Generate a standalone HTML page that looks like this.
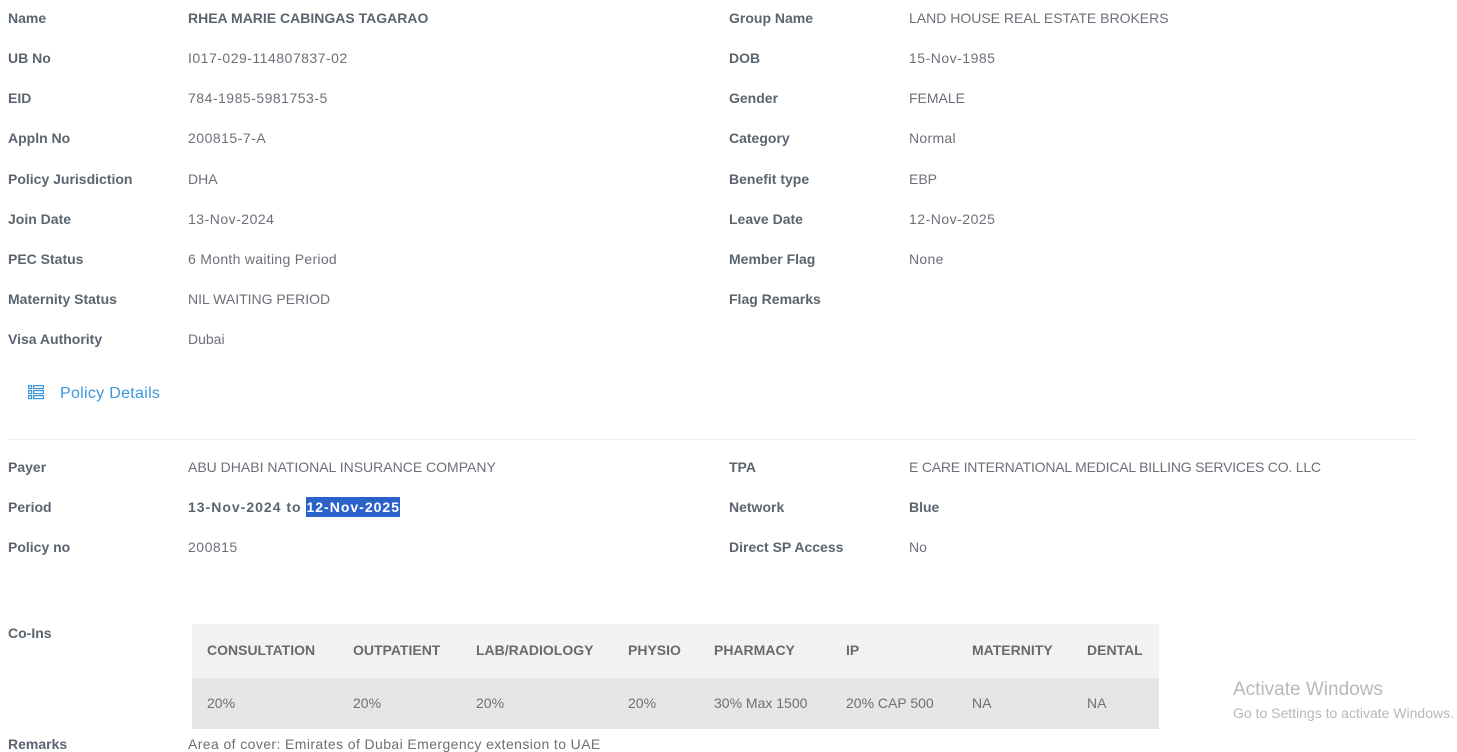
<!DOCTYPE html>
<html><head><meta charset="utf-8"><style>
body{margin:0;background:#fff;width:1457px;height:751px;overflow:hidden;position:relative;font-family:"Liberation Sans",sans-serif;font-size:14px;}
.t{position:absolute;line-height:16px;white-space:nowrap;}
.l{font-weight:bold;color:#5b6570;}
.v{color:#6b7078;}
.b{font-weight:bold;color:#5b6570;}
.h{font-weight:bold;color:#6a6a6a;}
</style></head><body>
<div class="t l" style="left:8px;top:10px">Name</div><div class="t b" style="left:188px;top:10px">RHEA MARIE CABINGAS TAGARAO</div>
<div class="t l" style="left:8px;top:50px">UB No</div><div class="t v" style="left:188px;top:50px;letter-spacing:0.5px">I017-029-114807837-02</div>
<div class="t l" style="left:8px;top:90px">EID</div><div class="t v" style="left:188px;top:90px;letter-spacing:0.5px">784-1985-5981753-5</div>
<div class="t l" style="left:8px;top:130px">Appln No</div><div class="t v" style="left:188px;top:130px;letter-spacing:0.5px">200815-7-A</div>
<div class="t l" style="left:8px;top:171px">Policy Jurisdiction</div><div class="t v" style="left:188px;top:171px">DHA</div>
<div class="t l" style="left:8px;top:211px">Join Date</div><div class="t v" style="left:188px;top:211px;letter-spacing:0.5px">13-Nov-2024</div>
<div class="t l" style="left:8px;top:251px">PEC Status</div><div class="t v" style="left:188px;top:251px;letter-spacing:0.3px">6 Month waiting Period</div>
<div class="t l" style="left:8px;top:291px">Maternity Status</div><div class="t v" style="left:188px;top:291px">NIL WAITING PERIOD</div>
<div class="t l" style="left:8px;top:331px">Visa Authority</div><div class="t v" style="left:188px;top:331px">Dubai</div>

<div class="t l" style="left:729px;top:10px">Group Name</div><div class="t v" style="left:909px;top:10px">LAND HOUSE REAL ESTATE BROKERS</div>
<div class="t l" style="left:729px;top:50px">DOB</div><div class="t v" style="left:909px;top:50px;letter-spacing:0.5px">15-Nov-1985</div>
<div class="t l" style="left:729px;top:90px">Gender</div><div class="t v" style="left:909px;top:90px">FEMALE</div>
<div class="t l" style="left:729px;top:130px">Category</div><div class="t v" style="left:909px;top:130px;letter-spacing:0.3px">Normal</div>
<div class="t l" style="left:729px;top:171px">Benefit type</div><div class="t v" style="left:909px;top:171px">EBP</div>
<div class="t l" style="left:729px;top:211px">Leave Date</div><div class="t v" style="left:909px;top:211px;letter-spacing:0.5px">12-Nov-2025</div>
<div class="t l" style="left:729px;top:251px">Member Flag</div><div class="t v" style="left:909px;top:251px;letter-spacing:0.3px">None</div>
<div class="t l" style="left:729px;top:291px">Flag Remarks</div>

<svg style="position:absolute;left:28px;top:385px" width="16" height="15" viewBox="0 0 16 15" fill="none" stroke="#3a97dd" stroke-width="1.2">
<rect x="0.6" y="0.6" width="3" height="3"/><rect x="5.6" y="0.6" width="9.8" height="3"/>
<rect x="0.6" y="5.6" width="3" height="3"/><rect x="5.6" y="5.6" width="9.8" height="3"/>
<rect x="0.6" y="10.6" width="3" height="3"/><rect x="5.6" y="10.6" width="9.8" height="3"/>
</svg>
<div class="t" style="left:60px;top:385px;font-size:16px;line-height:18px;color:#3a97dd;letter-spacing:0.3px">Policy Details</div>
<div style="position:absolute;left:8px;top:439px;width:1408px;height:1px;background:#eceef0"></div>

<div class="t l" style="left:8px;top:459px">Payer</div><div class="t v" style="left:188px;top:459px">ABU DHABI NATIONAL INSURANCE COMPANY</div>
<div class="t l" style="left:8px;top:499px">Period</div><div class="t b" style="left:188px;top:499px;letter-spacing:1px">13-Nov-2024 to <span style="background:#2a62c9;color:#fff;padding:2px 0">12-Nov-2025</span></div>
<div class="t l" style="left:8px;top:539px">Policy no</div><div class="t v" style="left:188px;top:539px;letter-spacing:0.5px">200815</div>
<div class="t l" style="left:729px;top:459px">TPA</div><div class="t v" style="left:909px;top:459px;letter-spacing:-0.2px">E CARE INTERNATIONAL MEDICAL BILLING SERVICES CO. LLC</div>
<div class="t l" style="left:729px;top:499px">Network</div><div class="t b" style="left:909px;top:499px">Blue</div>
<div class="t l" style="left:729px;top:539px">Direct SP Access</div><div class="t v" style="left:909px;top:539px">No</div>

<div class="t l" style="left:8px;top:625px">Co-Ins</div>
<div style="position:absolute;left:192px;top:624px;width:967px;height:54px;background:#f2f2f2"></div>
<div style="position:absolute;left:192px;top:678px;width:967px;height:51px;background:#e6e6e6"></div>
<div class="t h" style="left:207px;top:642px">CONSULTATION</div>
<div class="t h" style="left:353px;top:642px">OUTPATIENT</div>
<div class="t h" style="left:476px;top:642px">LAB/RADIOLOGY</div>
<div class="t h" style="left:628px;top:642px">PHYSIO</div>
<div class="t h" style="left:714px;top:642px">PHARMACY</div>
<div class="t h" style="left:846px;top:642px">IP</div>
<div class="t h" style="left:972px;top:642px">MATERNITY</div>
<div class="t h" style="left:1087px;top:642px">DENTAL</div>
<div class="t v" style="left:207px;top:695px">20%</div>
<div class="t v" style="left:353px;top:695px">20%</div>
<div class="t v" style="left:476px;top:695px">20%</div>
<div class="t v" style="left:628px;top:695px">20%</div>
<div class="t v" style="left:714px;top:695px">30% Max 1500</div>
<div class="t v" style="left:846px;top:695px">20% CAP 500</div>
<div class="t v" style="left:972px;top:695px">NA</div>
<div class="t v" style="left:1087px;top:695px">NA</div>

<div class="t l" style="left:8px;top:736px">Remarks</div>
<div class="t v" style="left:188px;top:736px;letter-spacing:0.4px">Area of cover: Emirates of Dubai Emergency extension to UAE</div>

<div class="t" style="left:1233px;top:680px;font-size:19px;line-height:20px;color:#b8b8b8">Activate Windows</div>
<div class="t" style="left:1233px;top:705px;font-size:14px;color:#b8b8b8">Go to Settings to activate Windows.</div>
</body></html>
